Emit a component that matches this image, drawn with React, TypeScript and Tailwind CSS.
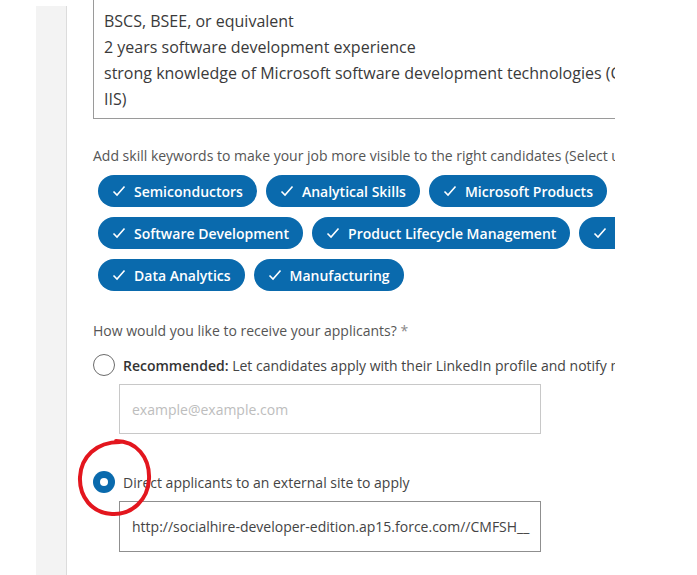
const rows: string[][] = [
  ["Semiconductors", "Analytical Skills", "Microsoft Products", "Embedded Systems"],
  ["Software Development", "Product Lifecycle Management", "C#"],
  ["Data Analytics", "Manufacturing"],
];

function Chip({ label }: { label: string }) {
  return (
    <div className="shrink-0 h-8 px-[14px] rounded-full bg-[#0a6aad] text-white text-[14px] font-semibold flex items-center gap-[8px] whitespace-nowrap">
      <svg width="14" height="12" viewBox="0 0 14 12" fill="none">
        <path d="M1.5 6.5 L5 10 L12.5 1.5" stroke="white" strokeWidth="1.6" />
      </svg>
      <span>{label}</span>
    </div>
  );
}

function Radio({ checked }: { checked?: boolean }) {
  if (checked) {
    return (
      <div className="shrink-0 w-[22px] h-[22px] rounded-full bg-[#0a6aad] flex items-center justify-center">
        <div className="w-[8px] h-[8px] rounded-full bg-white" />
      </div>
    );
  }
  return <div className="shrink-0 w-[22px] h-[22px] rounded-full border-[1.5px] border-[#6b6b6b] bg-white" />;
}

export default function App() {
  return (
    <div
      className="relative w-full h-[575px] bg-white overflow-hidden flex text-[#333]"
      style={{ fontFamily: "'Open Sans', 'Noto Sans', sans-serif" }}
    >
      {/* left rail */}
      <div className="w-9 shrink-0" />
      <div className="w-[31px] shrink-0 bg-[#f3f3f3] border-r border-[#dcdcdc] mt-[6px]" />

      {/* form column, clipped on the right */}
      <div className="w-[548px] shrink-0 pl-[26px] overflow-hidden">
        <div className="w-[580px] -mt-[24px] pt-[31px] pb-[6px] pl-[10px] border border-[#9a9a9a] text-[16px] leading-[26px] text-[#3a3a3a] whitespace-nowrap">
          <div>BSCS, BSEE, or equivalent</div>
          <div>2 years software development experience</div>
          <div>strong knowledge of Microsoft software development technologies (C#, .NET,</div>
          <div>IIS)</div>
        </div>

        <div className="mt-[27px] text-[14px] leading-5 text-[#555] whitespace-nowrap">
          Add skill keywords to make your job more visible to the right candidates (Select up to 10)
        </div>

        <div className="mt-[9px] pl-[5px] flex flex-col gap-[10px]">
          {rows.map((r, i) => (
            <div key={i} className="flex gap-[9px]">
              {r.map((c) => (
                <Chip key={c} label={c} />
              ))}
            </div>
          ))}
        </div>

        <div className="mt-[30px] text-[14px] leading-5 text-[#555] whitespace-nowrap">
          How would you like to receive your applicants? <span className="text-[#888]">*</span>
        </div>

        <div className="mt-[12px] h-6 flex items-center gap-2 text-[14px] text-[#444] whitespace-nowrap">
          <Radio />
          <span>
            <span className="font-semibold text-[#333]">Recommended:</span> Let candidates apply with their LinkedIn profile and notify me by email
          </span>
        </div>
        <div className="mt-[7px] ml-[26px] w-[422px] h-[50px] border border-[#c8c8c8] flex items-center px-3 text-[14px] text-[#bdbdbd]">
          example@example.com
        </div>

        <div className="mt-[36px] h-6 flex items-center gap-2 text-[14px] text-[#444] whitespace-nowrap">
          <Radio checked />
          <span>Direct applicants to an external site to apply</span>
        </div>
        <div className="mt-[7px] ml-[26px] w-[422px] h-[51px] border border-[#8f8f8f] flex items-center px-3 text-[14px] text-[#444] whitespace-nowrap overflow-hidden">
          http://socialhire-developer-edition.ap15.force.com//CMFSH__
        </div>
      </div>

      {/* red annotation circle */}
      <svg className="absolute left-[74px] top-[437px]" width="82" height="82" viewBox="0 0 82 82" fill="none">
        <path
          d="M42 4 C62 4 76 20 75 42 C74 63 58 78 38 77 C18 76 5 60 6 40 C7 20 22 5 46 5"
          stroke="#e3161e"
          strokeWidth="4"
          strokeLinecap="round"
        />
      </svg>
    </div>
  );
}
